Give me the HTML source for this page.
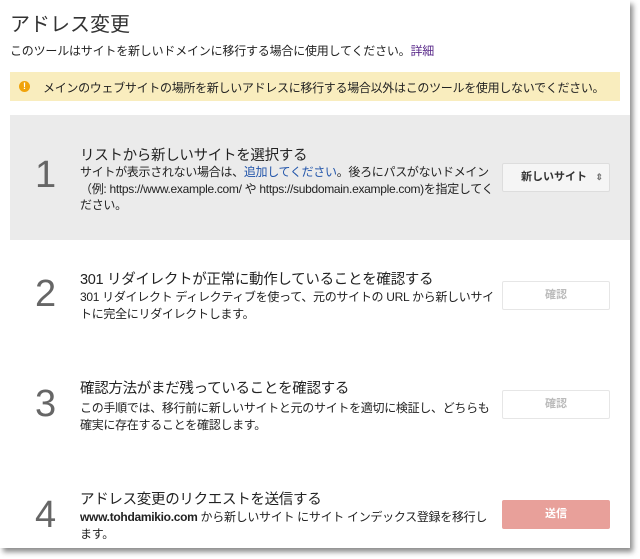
<!DOCTYPE html><html><head><meta charset="utf-8"><style>
body{margin:0;width:640px;height:559px;background:#fff;font-family:"Liberation Sans","Noto Sans CJK JP",sans-serif;position:relative;overflow:hidden;color:#222}
.card{position:absolute;left:0;top:0;width:630px;height:548px;background:#fff;box-shadow:3px 4px 5px rgba(0,0,0,.45)}
.a{position:absolute;white-space:nowrap}
.num{position:absolute;left:35px;font-size:38px;color:#666;font-weight:300}
.t{position:absolute;left:80px;font-size:14.5px;color:#222;letter-spacing:-0.3px}
.b{position:absolute;left:80px;font-size:12px;line-height:16.5px;color:#222;width:418px;letter-spacing:-0.3px}
.btn{position:absolute;left:502px;width:106px;height:27px;border:1px solid #e6e6e6;background:#fff;border-radius:2px;font-size:11px;font-weight:bold;color:#bbb;text-align:center;line-height:27px}
</style></head><body><div class="card">
<div class="a" style="left:10px;top:8px;font-size:20px;color:#333">アドレス変更</div>
<div class="a" style="left:10px;top:42px;font-size:12px;letter-spacing:-0.2px">このツールはサイトを新しいドメインに移行する場合に使用してください。<span style="color:#5a2a8a">詳細</span></div>
<div style="position:absolute;left:10px;top:72px;width:610px;height:29px;background:#f9edbe"></div>
<div style="position:absolute;left:19px;top:81px;width:11px;height:11px;border-radius:50%;background:#f0a30a;color:#fff;font-size:9px;font-weight:bold;text-align:center;line-height:11px">!</div>
<div class="a" style="left:43px;top:79px;font-size:12px;letter-spacing:-0.3px">メインのウェブサイトの場所を新しいアドレスに移行する場合以外はこのツールを使用しないでください。</div>
<div style="position:absolute;left:10px;top:115px;width:620px;height:125px;background:#ebebeb"></div>
<div class="num" style="top:154px">1</div>
<div class="t" style="top:144px">リストから新しいサイトを選択する</div>
<div class="b" style="top:164px">サイトが表示されない場合は、<span style="color:#2255aa">追加してください</span>。後ろにパスがないドメイン（例: https://www.example.com/ や https://subdomain.example.com)を指定してください。</div>
<div class="btn" style="top:163px;background:#f5f5f5;border-color:#ddd;color:#333;text-align:left;padding-left:18px;width:88px">新しいサイト<span style="position:absolute;right:6px;top:0;color:#777;font-size:9px">⇕</span></div>
<div class="num" style="top:273px">2</div>
<div class="t" style="top:268px">301 リダイレクトが正常に動作していることを確認する</div>
<div class="b" style="top:289px">301 リダイレクト ディレクティブを使って、元のサイトの URL から新しいサイトに完全にリダイレクトします。</div>
<div class="btn" style="top:281px">確認</div>
<div class="num" style="top:383px">3</div>
<div class="t" style="top:377px">確認方法がまだ残っていることを確認する</div>
<div class="b" style="top:400px">この手順では、移行前に新しいサイトと元のサイトを適切に検証し、どちらも確実に存在することを確認します。</div>
<div class="btn" style="top:390px">確認</div>
<div class="num" style="top:494px">4</div>
<div class="t" style="top:488px">アドレス変更のリクエストを送信する</div>
<div class="b" style="top:509px"><b>www.tohdamikio.com</b> から新しいサイト にサイト インデックス登録を移行します。</div>
<div class="btn" style="top:500px;background:#e8a09a;border-color:#e8a09a;color:#fff">送信</div>
</div></body></html>
